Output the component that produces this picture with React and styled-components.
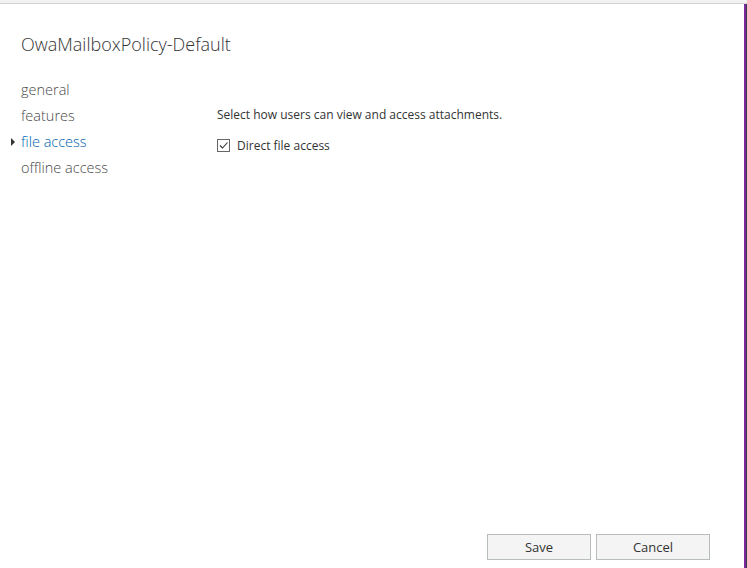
import React from "react";
import styled, { createGlobalStyle } from "styled-components";

const Global = createGlobalStyle`
  html, body { margin: 0; padding: 0; background: #fff; }
  body { font-family: "Open Sans", "Noto Sans", sans-serif; }
`;

const navItems = ["general", "features", "file access", "offline access"];

export default function App() {
  const active = "file access";
  return (
    <>
      <Global />
      <Frame>
        <TopStrip />
        <Body>
          <Dialog>
            <Title>OwaMailboxPolicy-Default</Title>
            <Main>
              <Nav>
                {navItems.map((item) => (
                  <NavItem key={item} $active={item === active}>
                    {item === active && <Caret />}
                    {item}
                  </NavItem>
                ))}
              </Nav>
              <Content>
                <Hint>Select how users can view and access attachments.</Hint>
                <CheckRow>
                  <Box>
                    <svg width="11" height="11" viewBox="0 0 11 11">
                      <path d="M2 5.5 L4.5 8 L9.5 2.5" fill="none" stroke="#333" strokeWidth="1.1" />
                    </svg>
                  </Box>
                  Direct file access
                </CheckRow>
              </Content>
            </Main>
            <Footer>
              <Button $w={104}>Save</Button>
              <Button $w={114}>Cancel</Button>
            </Footer>
          </Dialog>
          <SideEdge />
        </Body>
      </Frame>
    </>
  );
}

const Frame = styled.div`
  width: 747px;
  height: 568px;
  display: flex;
  flex-direction: column;
  overflow: hidden;
`;
const TopStrip = styled.div`
  height: 3px;
  background: #f2f2f2;
  border-bottom: 1px solid #d4d4d4;
`;
const Body = styled.div`
  flex: 1;
  display: flex;
`;
const Dialog = styled.div`
  flex: 1;
  display: flex;
  flex-direction: column;
  padding: 28px 0 0 21px;
`;
const SideEdge = styled.div`
  width: 2px;
  background: #7a2a9e;
  border-right: 1px solid #3a3a4a;
`;
const Title = styled.h1`
  margin: 0;
  font-family: "Open Sans", sans-serif;
  font-weight: 300;
  font-size: 18px;
  color: #333;
  line-height: 24px;
`;
const Main = styled.div`
  flex: 1;
  display: flex;
  margin-top: 21px;
`;
const Nav = styled.div`
  width: 196px;
  display: flex;
  flex-direction: column;
`;
const NavItem = styled.div`
  position: relative;
  font-size: 14.5px;
  font-weight: 300;
  line-height: 26px;
  color: ${(p) => (p.$active ? "#0062ad" : "#4a4a4a")};
`;
const Caret = styled.span`
  position: absolute;
  left: -10px;
  top: 9px;
  width: 0;
  height: 0;
  border-left: 4px solid #333;
  border-top: 4px solid transparent;
  border-bottom: 4px solid transparent;
`;
const Content = styled.div`
  padding-top: 30px;
  display: flex;
  flex-direction: column;
`;
const Hint = styled.div`
  font-size: 12px;
  color: #333;
  line-height: 16px;
`;
const CheckRow = styled.label`
  margin-top: 14px;
  display: flex;
  align-items: center;
  gap: 7px;
  font-size: 12px;
  color: #333;
`;
const Box = styled.span`
  width: 11px;
  height: 11px;
  border: 1px solid #666;
  display: flex;
  align-items: center;
  justify-content: center;
`;
const Footer = styled.div`
  display: flex;
  justify-content: flex-end;
  gap: 5px;
  padding: 0 34px 8px 0;
`;
const Button = styled.button`
  width: ${(p) => p.$w}px;
  height: 26px;
  background: #f4f4f4;
  border: 1px solid #b7bdbd;
  font-family: "Open Sans", sans-serif;
  font-size: 13px;
  color: #333;
  padding: 0;
`;
